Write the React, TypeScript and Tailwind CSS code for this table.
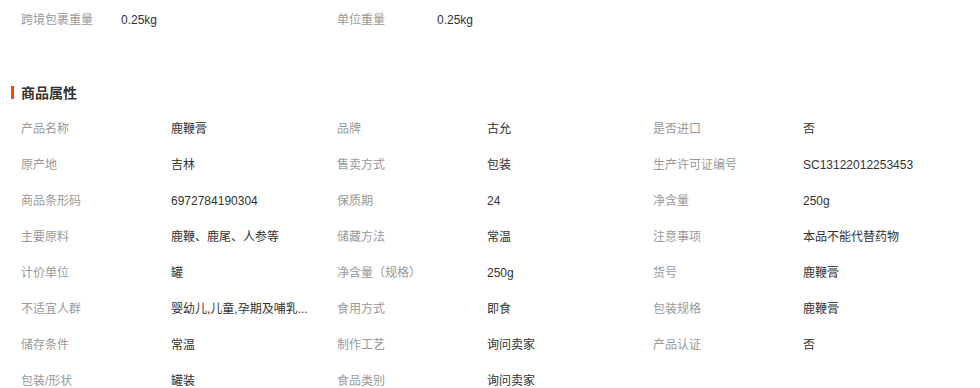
const FONT = "font-['Liberation_Sans','Noto_Sans_CJK_SC',sans-serif]";

type Attr = { label: string; value: string };

const TOP: Attr[] = [
  { label: "跨境包裹重量", value: "0.25kg" },
  { label: "单位重量", value: "0.25kg" },
];

const ATTRS: Attr[] = [
  { label: "产品名称", value: "鹿鞭膏" },
  { label: "品牌", value: "古允" },
  { label: "是否进口", value: "否" },
  { label: "原产地", value: "吉林" },
  { label: "售卖方式", value: "包装" },
  { label: "生产许可证编号", value: "SC13122012253453" },
  { label: "商品条形码", value: "6972784190304" },
  { label: "保质期", value: "24" },
  { label: "净含量", value: "250g" },
  { label: "主要原料", value: "鹿鞭、鹿尾、人参等" },
  { label: "储藏方法", value: "常温" },
  { label: "注意事项", value: "本品不能代替药物" },
  { label: "计价单位", value: "罐" },
  { label: "净含量（规格）", value: "250g" },
  { label: "货号", value: "鹿鞭膏" },
  // already shortened by the page, ellipsis is part of the text
  { label: "不适宜人群", value: "婴幼儿,儿童,孕期及哺乳..." },
  { label: "食用方式", value: "即食" },
  { label: "包装规格", value: "鹿鞭膏" },
  { label: "储存条件", value: "常温" },
  { label: "制作工艺", value: "询问卖家" },
  { label: "产品认证", value: "否" },
  { label: "包装/形状", value: "罐装" },
  { label: "食品类别", value: "询问卖家" },
];

export default function App() {
  return (
    <div className={`${FONT} w-[980px] h-[388px] overflow-hidden bg-white text-[12px] pl-[21px]`}>
      {/* shipping weights */}
      <div className="grid grid-cols-[316px_316px] h-[40px] items-center">
        {TOP.map((a) => (
          <div key={a.label} className="flex">
            <span className="w-[100px] text-[#999]">{a.label}</span>
            <span className="text-[#333]">{a.value}</span>
          </div>
        ))}
      </div>

      <div className="relative mt-[43px] h-[20px] flex items-center">
        <span className="absolute left-[-10px] top-[3px] h-[13px] w-[3px] bg-[#ff4400]" />
        <h3 className="text-[14px] font-bold text-[#333]">商品属性</h3>
      </div>

      <div className="mt-[8px] grid grid-cols-[316px_316px_316px]">
        {ATTRS.map((a) => (
          <div key={a.label} className="flex h-[36px] items-center">
            <span className="w-[150px] shrink-0 text-[#999]">{a.label}</span>
            <span className="whitespace-nowrap text-[#333]">{a.value}</span>
          </div>
        ))}
      </div>
    </div>
  );
}
